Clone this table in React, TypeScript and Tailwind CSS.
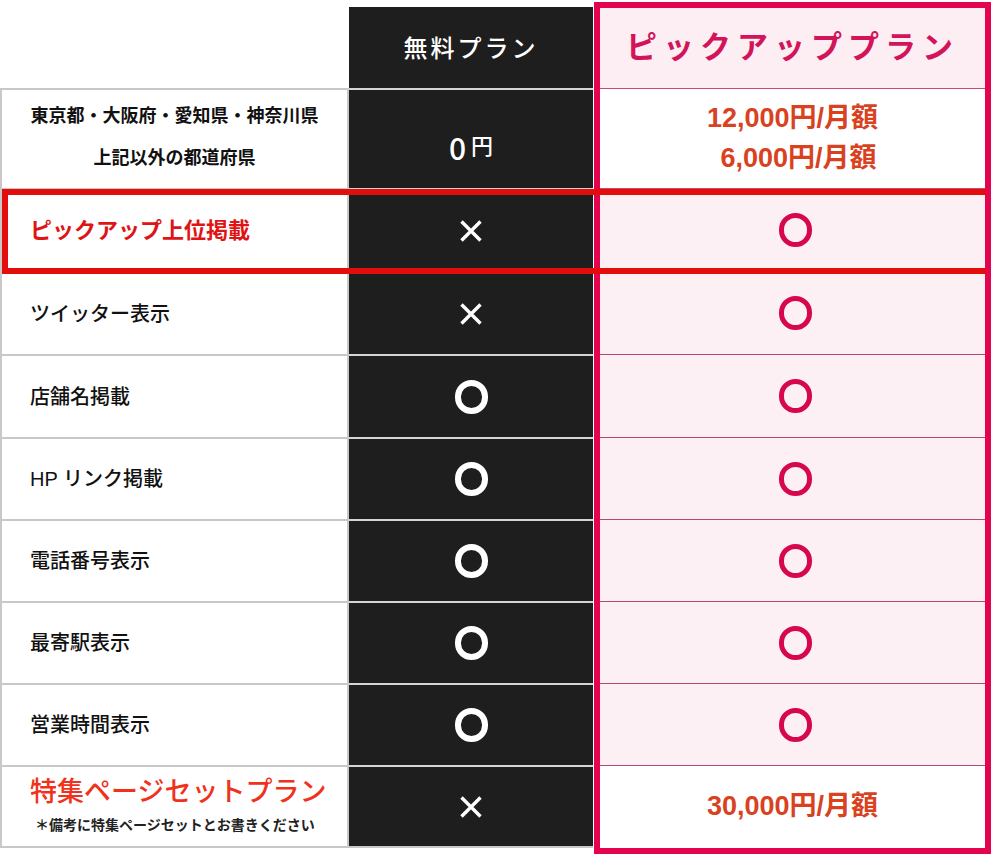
import React from 'react'

const JP = "font-['Liberation_Sans','Noto_Sans_CJK_JP',sans-serif]"

// row heights below the header, line to line
const H = ['h-[100px]', 'h-[83px]', 'h-[83px]', 'h-[83px]', 'h-[82px]', 'h-[82px]', 'h-[82px]', 'h-[82px]', 'h-[83px]']

const features = [
  { label: 'ツイッター表示', free: false },
  { label: '店舗名掲載', free: true },
  { label: 'HP リンク掲載', free: true },
  { label: '電話番号表示', free: true },
  { label: '最寄駅表示', free: true },
  { label: '営業時間表示', free: true },
]

function Cross() {
  return (
    <svg width="26" height="26" viewBox="0 0 26 26">
      <path d="M3.5 3.5 L22.5 22.5 M22.5 3.5 L3.5 22.5" stroke="#fff" strokeWidth="3.4" />
    </svg>
  )
}

function Ring({ pink }: { pink?: boolean }) {
  return pink ? (
    <div className="w-[33px] h-[34px] rounded-full border-[5px] border-[#d7074f]" />
  ) : (
    <div className="w-[33px] h-[34px] rounded-full border-[6px] border-white" />
  )
}

export default function App() {
  return (
    <div className={`relative w-[991px] h-[855px] bg-white overflow-hidden ${JP}`}>
      <div className="flex">
        {/* Labels */}
        <div className="w-[349px] flex flex-col">
          <div className="h-[88px]" />
          <div className={`${H[0]} border-t-2 border-x-2 border-[#c8c8c8] flex flex-col items-center justify-center gap-[24px] pb-[4px] text-[18px] font-bold text-[#111] leading-none`}>
            <div>東京都・大阪府・愛知県・神奈川県</div>
            <div>上記以外の都道府県</div>
          </div>
          <div className={`${H[1]} border-t-2 border-x-2 border-[#c8c8c8] flex items-center pl-[28px] text-[22px] font-bold text-[#e01414]`}>
            ピックアップ上位掲載
          </div>
          {features.map((f, i) => (
            <div
              key={f.label}
              className={`${H[i + 2]} border-t-2 border-x-2 border-[#c8c8c8] flex items-center pl-[28px] text-[20px] font-medium text-[#111]`}
            >
              {f.label}
            </div>
          ))}
          <div className={`${H[8]} border-y-2 border-x-2 border-[#c8c8c8] flex flex-col justify-center pl-[28px] pb-[2px]`}>
            <div className="text-[27px] text-[#f0321c] font-medium leading-[34px]">特集ページセットプラン</div>
            <div className="text-[14px] font-bold text-[#222] mt-[6px] pl-[5px]">＊備考に特集ページセットとお書きください</div>
          </div>
        </div>

        {/* Free plan */}
        <div className="w-[244px] flex flex-col">
          <div className="h-[7px]" />
          <div className="h-[81px] bg-[#1e1e1e] flex items-center justify-center text-white text-[24px] font-medium tracking-[3px] pt-[2px]">
            無料プラン
          </div>
          <div className={`${H[0]} bg-[#1e1e1e] border-t-2 border-[#d4d4d4] flex items-center justify-center text-white pt-[16px]`}>
            <span className="text-[30px] leading-none font-['Noto_Sans_CJK_JP',sans-serif] font-medium">0</span>
            <span className="text-[22px] leading-none ml-[5px] font-medium">円</span>
          </div>
          <div className={`${H[1]} bg-[#1e1e1e] border-t-2 border-[#d4d4d4] flex items-center justify-center`}>
            <Cross />
          </div>
          {features.map((f, i) => (
            <div key={f.label} className={`${H[i + 2]} bg-[#1e1e1e] border-t-2 border-[#d4d4d4] flex items-center justify-center`}>
              {f.free ? <Ring /> : <Cross />}
            </div>
          ))}
          <div className={`${H[8]} bg-[#1e1e1e] border-y-2 border-t-[#d4d4d4] border-b-[#c8c8c8] flex items-center justify-center`}>
            <Cross />
          </div>
        </div>

        {/* Pickup plan */}
        <div className="ml-[1px] mt-[2px] flex-1 border-[6px] border-[#e4034f] flex flex-col">
          <div className="h-[80px] bg-[#fdeef3] flex items-center justify-center text-[31px] font-bold text-[#d2145a] tracking-[6px]">
            ピックアッププラン
          </div>
          <div className={`${H[0]} bg-white border-t border-[#c9487c] flex flex-col items-center justify-center gap-[12px] pb-[2px] text-[27px] font-bold text-[#d8421f] leading-[28px]`}>
            <div>12,000円/月額</div>
            <div className="pl-[12px]">6,000円/月額</div>
          </div>
          <div className={`${H[1]} bg-[#fcf0f4] border-t border-[#c9487c] flex items-center justify-center pl-[6px]`}>
            <Ring pink />
          </div>
          {features.map((f, i) => (
            <div key={f.label} className={`${H[i + 2]} bg-[#fcf0f4] border-t border-[#b8467a] flex items-center justify-center pl-[6px]`}>
              <Ring pink />
            </div>
          ))}
          <div className={`${H[8]} bg-white border-t border-[#b8467a] flex items-center justify-center text-[27px] font-bold text-[#d8421f] pb-[2px]`}>
            30,000円/月額
          </div>
        </div>
      </div>

      {/* highlight frame over the pickup row */}
      <div className="absolute top-[189px] left-[2px] right-[5px] h-[85px] border-y-[6px] border-l-[6px] border-[#e30d0d]" />
    </div>
  )
}
